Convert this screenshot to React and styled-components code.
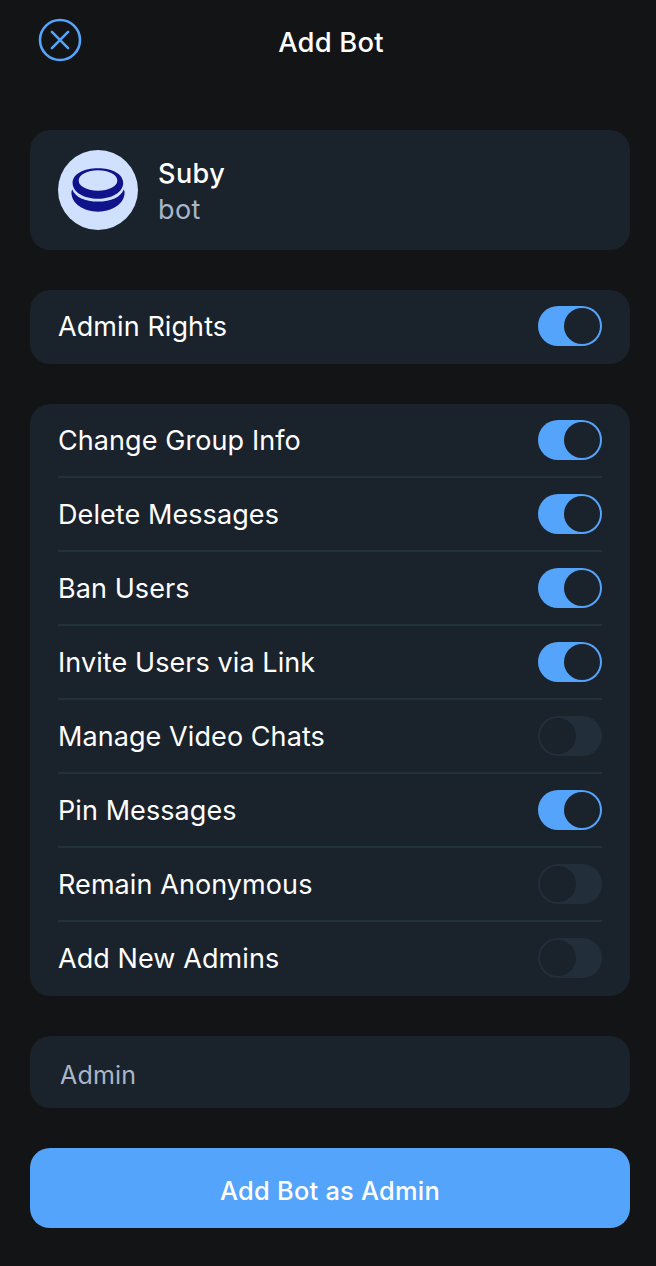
import React, { useState } from "react";
import styled, { createGlobalStyle } from "styled-components";

const Global = createGlobalStyle`
  * { box-sizing: border-box; }
  body { margin: 0; background: #121415; font-family: Inter, sans-serif; color: #fff; }
`;
const Page = styled.main`
  width: 656px;
  height: 1266px;
  padding: 0 26px 0 30px;
  display: flex;
  flex-direction: column;
  background: #121415;
`;
const Header = styled.header`
  height: 130px;
  padding: 18px 0 0 8px;
  display: grid;
  grid-template-columns: 44px 1fr 44px;
  align-items: start;
`;
const Close = styled.button`
  width: 44px;
  height: 44px;
  padding: 0;
  border: 0;
  background: none;
  svg { display: block; }
`;
const Title = styled.h1`
  margin: 7px 0 0 -6px;
  text-align: center;
  font-size: 27.4px;
  line-height: 34px;
  font-weight: 500;
  letter-spacing: 0.2px;
`;
const Text = styled.span`
  white-space: nowrap;
  font-size: ${p => p.$size || 27}px;
  font-weight: ${p => p.$weight || 400};
  letter-spacing: ${p => p.$spacing ?? 0.08}px;
  color: ${p => p.$color || "#fff"};
`;
const Card = styled.section`
  border-radius: 20px;
  background: #1a222c;
  padding: 0 28px;
  margin-bottom: 40px;
`;
const Profile = styled(Card)`
  height: 120px;
  display: flex;
  align-items: center;
  gap: 20px;
`;
const Names = styled.div`
  display: flex;
  flex-direction: column;
  line-height: 36px;
  padding-top: 4px;
`;
const Row = styled.div`
  height: 74px;
  display: flex;
  align-items: center;
  justify-content: space-between;
  padding-bottom: 2px;
  & + & { box-shadow: 0 -2px 0 #22303a; }
`;
const Switch = styled.button`
  width: 64px;
  height: 40px;
  padding: 2px;
  border: 0;
  border-radius: 20px;
  display: flex;
  justify-content: ${p => (p.$on ? "flex-end" : "flex-start")};
  background: ${p => (p.$on ? "#55a4fb" : "#232e3b")};
`;
const Knob = styled.span`
  width: 36px;
  height: 36px;
  border-radius: 50%;
  background: #1a222c;
`;
const Field = styled.input`
  height: 72px;
  border: 0;
  border-radius: 20px;
  padding: 6px 30px 0;
  margin-bottom: 40px;
  background: #1a222c;
  font: 400 25px Inter, sans-serif;
  letter-spacing: 0.2px;
  color: #fff;
  outline: none;
  &::placeholder { color: #a9b6c7; opacity: 1; }
`;
const Submit = styled.button`
  height: 80px;
  border: 0;
  border-radius: 20px;
  padding: 4px 0 0;
  background: #55a4fb;
  font-family: Inter, sans-serif;
`;
const rights = [
  ["Change Group Info", true], ["Delete Messages", true], ["Ban Users", true],
  ["Invite Users via Link", true], ["Manage Video Chats", false], ["Pin Messages", true],
  ["Remain Anonymous", false], ["Add New Admins", false],
];
function Right({ label, initial }) {
  const [on, setOn] = useState(initial);
  return (
    <Row>
      <Text>{label}</Text>
      <Switch $on={on} role="switch" aria-checked={on} aria-label={label} onClick={() => setOn(!on)}><Knob /></Switch>
    </Row>
  );
}
export default function App() {
  return (
    <Page>
      <Global />
      <Header>
        <Close aria-label="Close">
          <svg width="44" height="44" viewBox="0 0 44 44" fill="none" stroke="#55a4fb" strokeWidth="2.6" strokeLinecap="round">
            <circle cx="22" cy="22" r="20" />
            <path d="M13.9 13.9l16.2 16.2M30.1 13.9L13.9 30.1" />
          </svg>
        </Close>
        <Title>Add Bot</Title>
      </Header>
      <Profile>
        <svg width="80" height="80" viewBox="0 0 80 80">
          <circle cx="40" cy="40" r="40" fill="#d0e0ff" />
          <path fillRule="evenodd" fill="#10148a" d="M14.6 33C14.6 24 26 18.3 40 18.3s25.200 5.700 25.200 14.700S54 48.800 40 48.800 14.600 42 14.600 33zM20.700 30.500a19.300 10.200 0 0 0 38.600 0a19.300 10.200 0 0 0-38.600 0z" />
          <path fill="#10148a" d="M14.300 39.400C17 47 27 51.600 40 51.600s23-4.600 25.700-12.200q.9 1.200.9 3.200C66.600 54 54 61.700 40 61.700S13.400 54 13.400 42.600q0-2 .9-3.200z" />
        </svg>
        <Names>
          <Text $size={27} $weight={500} $spacing={0.45}>Suby</Text>
          <Text $size={27} $color="#a9b6c7" $spacing={0.45}>bot</Text>
        </Names>
      </Profile>
      <Card><Right label="Admin Rights" initial /></Card>
      <Card>{rights.map(([label, on]) => <Right key={label} label={label} initial={on} />)}</Card>
      <Field placeholder="Admin" aria-label="Admin title" />
      <Submit><Text $size={25.4} $weight={500} $spacing={0.25}>Add Bot as Admin</Text></Submit>
    </Page>
  );
}
